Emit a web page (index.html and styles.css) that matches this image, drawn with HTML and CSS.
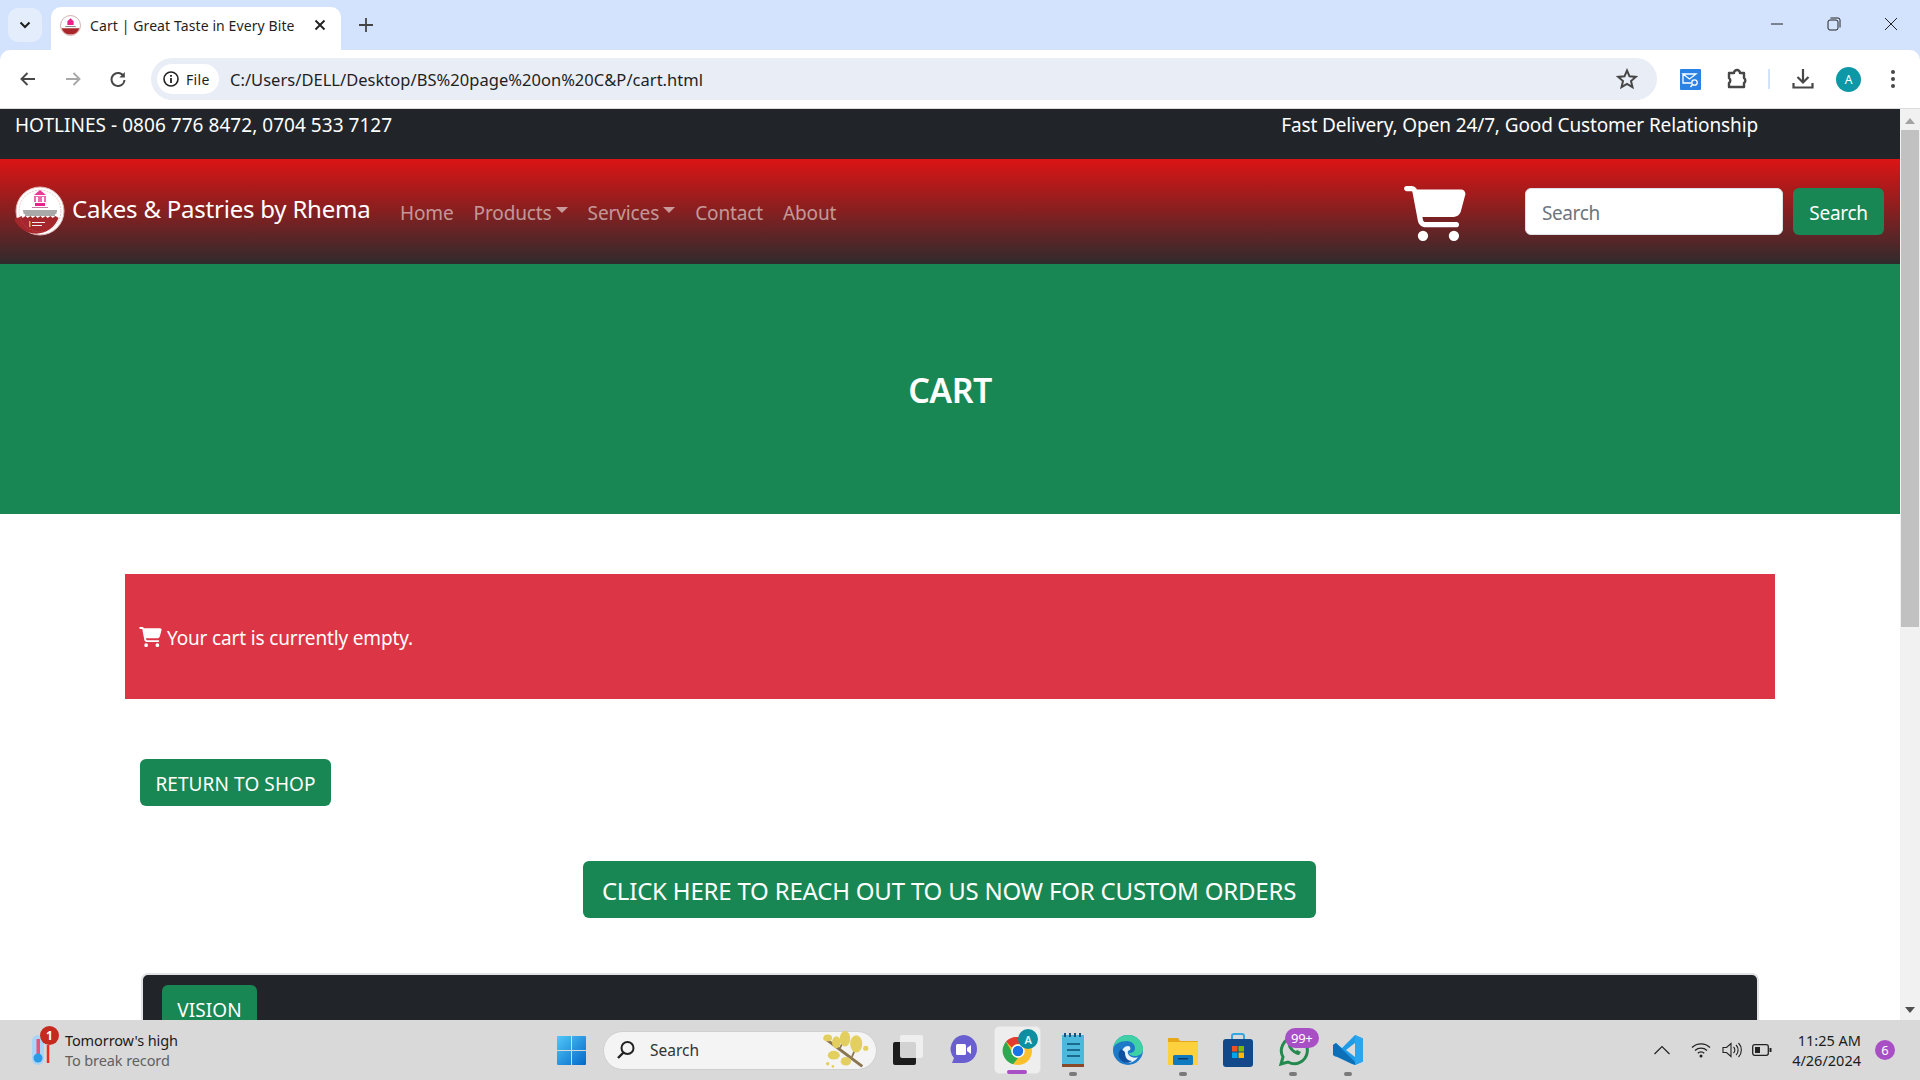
FILE: index.html
```html
<!DOCTYPE html>
<html lang="en">
<head>
<meta charset="utf-8">
<title>Cart | Great Taste in Every Bite</title>
<link rel="stylesheet" href="styles.css">
</head>
<body>
<div class="screen">
  <header class="chrome">
    <div class="tabstrip">
      <div class="tab-menu"><svg width="12" height="8" viewBox="0 0 12 8"><path d="M1.500 1.500 6 6l4.500-4.500" fill="none" stroke="#1f1f1f" stroke-width="2"/></svg></div>
      <div class="tab">
        <svg class="favicon" viewBox="0 0 20 20"><circle cx="10" cy="10" r="9.500" fill="#fff" stroke="#c9a0a0" stroke-width=".8"/><path d="M1.500 12.500h17a9 9 0 0 1-17 0z" fill="#a9272b"/><path d="M7 9.500V6l3-3 3 3v3.500z" fill="#e9258c"/><rect x="5" y="10.500" width="10" height="1" fill="#888"/></svg>
        <span class="tab-title">Cart | Great Taste in Every Bite</span>
        <svg class="tab-close" width="12" height="12" viewBox="0 0 12 12"><path d="M1.500 1.500l9 9m0-9l-9 9" stroke="#1f1f1f" stroke-width="1.800"/></svg>
      </div>
      <svg class="new-tab" width="14" height="14" viewBox="0 0 14 14"><path d="M7 0v14M0 7h14" stroke="#444" stroke-width="1.800"/></svg>
      <div class="win-controls">
        <svg width="14" height="14" viewBox="0 0 14 14"><path d="M1 7h12" stroke="#222" stroke-width="1"/></svg>
        <svg width="14" height="14" viewBox="0 0 14 14"><rect x="1" y="3" width="10" height="10" rx="2" fill="none" stroke="#222"/><path d="M3.500 1h7.500a2 2 0 0 1 2 2v7.500" fill="none" stroke="#222"/></svg>
        <svg width="14" height="14" viewBox="0 0 14 14"><path d="M1 1l12 12M13 1L1 13" stroke="#222" stroke-width="1"/></svg>
      </div>
    </div>
    <div class="toolbar">
      <svg class="tb-icon" width="18" height="18" viewBox="0 0 18 18"><path d="M16 9H3M8.500 3 2.500 9l6 6" fill="none" stroke="#474747" stroke-width="1.900"/></svg>
      <svg class="tb-icon" width="18" height="18" viewBox="0 0 18 18"><path d="M2 9h13M9.500 3l6 6-6 6" fill="none" stroke="#a8a8a8" stroke-width="1.900"/></svg>
      <svg class="tb-icon" width="18" height="18" viewBox="0 0 18 18"><path d="M14.800 6.500A6.500 6.500 0 1 0 15.500 10" fill="none" stroke="#474747" stroke-width="1.900"/><path d="M15.800 2v5.500h-5.500z" fill="#474747"/></svg>
      <div class="omnibox">
        <div class="site-chip">
          <svg width="16" height="16" viewBox="0 0 16 16"><circle cx="8" cy="8" r="7" fill="none" stroke="#222" stroke-width="1.600"/><path d="M8 7v5M8 4v1.800" stroke="#222" stroke-width="1.800"/></svg>
          <span>File</span>
        </div>
        <span class="url">C:/Users/DELL/Desktop/BS%20page%20on%20C&amp;P/cart.html</span>
        <svg class="star" width="22" height="22" viewBox="0 0 22 22"><path d="M11 2.500l2.500 5.800 6.300.6-4.800 4.100 1.500 6.200L11 16l-5.500 3.200L7 13 2.200 8.900l6.300-.6z" fill="none" stroke="#474747" stroke-width="2"/></svg>
      </div>
      <div class="ext-group">
        <svg width="21" height="21" viewBox="0 0 21 21"><rect width="21" height="21" rx="1" fill="#2a82e4"/><path d="M3 5h13l-6.500 5zM3 5v9h8" fill="none" stroke="#fff" stroke-width="1.300"/><circle cx="14.500" cy="13.500" r="2.700" fill="none" stroke="#fff" stroke-width="1.300"/><path d="M12.500 15.500l-2 2.500" stroke="#fff" stroke-width="1.300"/></svg>
        <svg width="22" height="22" viewBox="0 0 22 22"><path d="M3 5h5a3 3 0 0 1 6 0h4v5a3 3 0 0 1 0 5v4H3v-4a3 3 0 0 0 0-5z" fill="none" stroke="#474747" stroke-width="2.400" stroke-linejoin="round"/></svg>
        <span class="tb-divider"></span>
        <svg width="22" height="22" viewBox="0 0 22 22"><path d="M11 1v13M5.500 9l5.500 5.500L16.500 9" fill="none" stroke="#474747" stroke-width="2.200"/><path d="M1.500 15v4.500h19V15" fill="none" stroke="#474747" stroke-width="2.200"/></svg>
        <span class="avatar">A</span>
        <svg width="6" height="20" viewBox="0 0 6 20"><circle cx="3" cy="3" r="2" fill="#474747"/><circle cx="3" cy="10" r="2" fill="#474747"/><circle cx="3" cy="17" r="2" fill="#474747"/></svg>
      </div>
    </div>
  </header>

  <div class="viewport">
    <main class="page">
      <div class="topbar">
        <span class="hotlines">HOTLINES - 0806 776 8472, 0704 533 7127</span>
        <span class="topbar-right">Fast Delivery, Open 24/7, Good Customer Relationship</span>
      </div>
      <nav class="navbar">
        <svg class="logo" viewBox="0 0 50 50">
          <circle cx="25" cy="25" r="24" fill="#fff" stroke="#e0b0b0" stroke-width="1"/>
          <path d="M2.500 32l4-2 1 2 3-2 2 2 3-2 2 2 3-2 2 2 3-2 2 2 3-2 2 2 3-2 2 2 3-2 3 2a24 24 0 0 1-45 0z" fill="#a5262b"/>
          <circle cx="25" cy="25" r="21" fill="none" stroke="#c96a6a" stroke-width=".6" stroke-dasharray="2 1" opacity=".6"/>
          <path d="M25 4l6 5H19z" fill="#ea3a98"/>
          <path d="M19 10h12v6H19z" fill="#f06ab0"/>
          <path d="M21 11h2v5h-2zM27 11h2v5h-2z" fill="#fff"/>
          <path d="M20 17h10v3H20z" fill="#e8228b"/>
          <rect x="17" y="21" width="16" height="1" fill="#c77aa5"/>
          <rect x="8" y="24.500" width="34" height="1" fill="#555"/>
          <rect x="8.500" y="26.500" width="33" height="1" fill="#555"/>
          <rect x="10" y="28.500" width="30" height="1" fill="#555"/>
          <rect x="14" y="35" width="1.500" height="6" fill="#e8b030"/>
          <rect x="17" y="36" width="13" height="1" fill="#eee"/>
          <rect x="17" y="39" width="10" height="1" fill="#eee"/>
        </svg>
        <span class="brand">Cakes &amp; Pastries by Rhema</span>
        <ul class="nav-links">
          <li>Home</li>
          <li class="dropdown">Products</li>
          <li class="dropdown">Services</li>
          <li>Contact</li>
          <li>About</li>
        </ul>
        <svg class="nav-cart" viewBox="0 0 576 512"><path fill="#fff" d="M0 24C0 10.700 10.700 0 24 0H69.500c22 0 41.500 12.800 50.600 32h411c26.300 0 45.500 25 38.600 50.400l-41 152.300c-8.500 31.400-37 53.300-69.500 53.300H170.700l5.400 28.500c2.200 11.300 12.100 19.500 23.600 19.500H488c13.300 0 24 10.700 24 24s-10.700 24-24 24H199.700c-34.600 0-64.300-24.600-70.700-58.500L77.400 54.500c-.7-3.800-4-6.500-7.900-6.500H24C10.700 48 0 37.300 0 24zM128 464a48 48 0 1 1 96 0 48 48 0 1 1 -96 0zm336-48a48 48 0 1 1 0 96 48 48 0 1 1 0-96z"/></svg>
        <div class="search-form">
          <div class="search-input">Search</div>
          <div class="btn search-btn">Search</div>
        </div>
      </nav>
      <section class="hero"><h1>CART</h1></section>
      <div class="alert">
        <svg class="alert-cart" viewBox="0 0 576 512"><path fill="#fff" d="M0 24C0 10.700 10.700 0 24 0H69.500c22 0 41.500 12.800 50.600 32h411c26.300 0 45.500 25 38.600 50.400l-41 152.300c-8.500 31.400-37 53.300-69.500 53.300H170.700l5.400 28.500c2.200 11.300 12.100 19.500 23.600 19.500H488c13.300 0 24 10.700 24 24s-10.700 24-24 24H199.700c-34.600 0-64.300-24.600-70.700-58.500L77.400 54.500c-.7-3.800-4-6.500-7.900-6.500H24C10.700 48 0 37.300 0 24zM128 464a48 48 0 1 1 96 0 48 48 0 1 1 -96 0zm336-48a48 48 0 1 1 0 96 48 48 0 1 1 0-96z"/><path fill="#fff" d="M110 50h440l-45 200H150z"/></svg>
        <span>Your cart is currently empty.</span>
      </div>
      <div class="btn return-btn">RETURN TO SHOP</div>
      <div class="custom-row"><div class="btn custom-btn">CLICK HERE TO REACH OUT TO US NOW FOR CUSTOM ORDERS</div></div>
      <section class="info-card"><div class="btn vision-btn">VISION</div></section>
    </main>
    <aside class="scrollbar">
      <span class="arrow-up"></span>
      <div class="thumb"></div>
      <span class="arrow-down"></span>
    </aside>
  </div>

  <footer class="taskbar">
    <div class="weather">
      <div class="weather-icon">
        <svg width="24" height="34" viewBox="0 0 24 34"><rect x="2" y="2" width="12" height="30" rx="6" fill="#a9d4f7"/><rect x="6.500" y="6" width="3.500" height="16" fill="#e8527a"/><circle cx="8" cy="25" r="4.500" fill="#2b9be8"/><path d="M18 12v18" stroke="#f02a1c" stroke-width="2.500"/></svg>
        <span class="weather-badge">1</span>
      </div>
      <div class="weather-text"><div>Tomorrow's high</div><div class="muted">To break record</div></div>
    </div>
    <div class="task-center">
      <svg class="win-logo" viewBox="0 0 29 29"><defs><linearGradient id="wg" x1="0" y1="0" x2="1" y2="1"><stop offset="0" stop-color="#4fc8f8"/><stop offset="1" stop-color="#0567c9"/></linearGradient></defs><path fill="url(#wg)" d="M0 1a1 1 0 0 1 1-1h13v14H0zM15 0h13a1 1 0 0 1 1 1v13H15zM0 15h14v14H1a1 1 0 0 1-1-1zM15 15h14v13a1 1 0 0 1-1 1H15z"/></svg>
      <div class="task-search">
        <svg width="20" height="20" viewBox="0 0 20 20"><circle cx="11.500" cy="8" r="6" fill="none" stroke="#222" stroke-width="2"/><path d="M7.500 12.500 2 18" stroke="#222" stroke-width="2.400"/></svg>
        <span>Search</span>
        <svg class="branch" width="56" height="38" viewBox="0 0 56 44"><path d="M4 8l44 33" stroke="#8a7550" stroke-width="3.500"/><path d="M22 20l6-12M36 30l6-14" stroke="#8a7550" stroke-width="2"/><g fill="#e3cf5f"><ellipse cx="8" cy="8" rx="5" ry="4"/><ellipse cx="18" cy="13" rx="5" ry="7"/><ellipse cx="28" cy="9" rx="6" ry="9"/><ellipse cx="41" cy="15" rx="7" ry="10"/><ellipse cx="15" cy="28" rx="7" ry="5"/><ellipse cx="29" cy="35" rx="6" ry="5"/><circle cx="52" cy="20" r="3"/><circle cx="8" cy="38" r="2"/><circle cx="14" cy="41" r="1.500"/></g></svg>
      </div>
      <div class="apps">
        <div class="app">
          <svg width="30" height="30" viewBox="0 0 30 30"><rect x="0" y="7" width="23" height="23" rx="2" fill="#1c1c1c"/><rect x="7" y="0" width="23" height="23" rx="2" fill="#f2f2f2" fill-opacity=".85"/></svg>
        </div>
        <div class="app">
          <svg width="30" height="32" viewBox="0 0 30 32"><path d="M15 1a14 14 0 0 1 0 28H4l2-5A14 14 0 0 1 15 1z" fill="#6a5fd0"/><rect x="8" y="10" width="10" height="11" rx="1.500" fill="#fff"/><path d="M19 14l4-3v9l-4-3z" fill="#fff"/></svg>
        </div>
        <div class="app active">
          <svg width="32" height="32" viewBox="0 0 32 32"><circle cx="16" cy="17" r="14" fill="#fbc02d"/><path d="M16 3a14 14 0 0 1 12.100 7H16a7 7 0 0 0-6.100 3.500L4 7.500A14 14 0 0 1 16 3z" fill="#e33b2e"/><path d="M4 7.500l6 10.500a7 7 0 0 0 6 6l-5 6.200A14 14 0 0 1 4 7.500z" fill="#2da94f"/><circle cx="16" cy="17" r="6" fill="#1a73e8" stroke="#fff" stroke-width="1.500"/></svg>
          <span class="chrome-badge">A</span>
          <span class="active-bar"></span>
        </div>
        <div class="app running">
          <svg width="24" height="36" viewBox="0 0 24 36"><rect x="1" y="3" width="22" height="29" fill="#4cb8dc"/><rect x="1" y="32" width="22" height="3" fill="#8a4a2a"/><path d="M4 1v4M9 1v4M14 1v4M19 1v4" stroke="#1d4f78" stroke-width="2"/><path d="M6 12h13M6 18h13M6 24h13" stroke="#1a6a90" stroke-width="2"/></svg>
        </div>
        <div class="app">
          <svg width="30" height="30" viewBox="0 0 30 30"><circle cx="15" cy="15" r="15" fill="#1d7ac9"/><path d="M0 14C1 5 8 0 15 0c9 0 15 7 15 14 0 5-4 7-8 7-3 0-6-1-6-3 4 0 6-2 6-5 0-4-4-7-8-7C7 6 1 9 0 14z" fill="#3fd0a6"/><path d="M9 17c0-3 3-6 6-6 2 0 3 2 2 4-3 0-3 4 0 6 2 2 6 2 8 1-3 5-9 7-13 5-2-2-3-6-3-10z" fill="#fff" opacity=".9"/><path d="M12 18c0 5 3 8 7 8-4 3-9 2-12-2-2-3-2-7 1-10 1 1 4 2 4 4z" fill="#0f4fa0"/></svg>
        </div>
        <div class="app running">
          <svg width="30" height="30" viewBox="0 0 30 30"><path d="M0 3h10l2 3h18v24H0z" fill="#e6a819"/><rect y="7" width="30" height="23" fill="#fdd03d"/><rect x="5" y="20" width="20" height="10" rx="1.500" fill="#0f7ac0"/><rect x="10" y="23" width="10" height="1.500" fill="#053b6b"/></svg>
        </div>
        <div class="app">
          <svg width="30" height="36" viewBox="0 0 30 36"><path d="M9 8V4a2 2 0 0 1 2-2h8a2 2 0 0 1 2 2v4" fill="none" stroke="#36a6e0" stroke-width="2"/><rect y="7" width="30" height="28" rx="3" fill="#11498a"/><rect x="9" y="14" width="5.500" height="5.500" fill="#f25022"/><rect x="15.500" y="14" width="5.500" height="5.500" fill="#7fba00"/><rect x="9" y="20.500" width="5.500" height="5.500" fill="#00a4ef"/><rect x="15.500" y="20.500" width="5.500" height="5.500" fill="#ffb900"/></svg>
        </div>
        <div class="app running">
          <svg width="32" height="32" viewBox="0 0 32 32"><path d="M4 30l2-7A13 13 0 1 1 11 28z" fill="none" stroke="#25894f" stroke-width="3"/><path d="M11 10c-1 4 6 11 11 11l2-3-4-2-1 1c-2-1-3-2-4-4l1-1-2-4z" fill="#25894f"/></svg>
          <span class="wa-badge">99+</span>
        </div>
        <div class="app running">
          <svg width="30" height="30" viewBox="0 0 30 30"><path d="M22 0l8 3.500v23L22 30 9 17l-6 5-3-2v-10l3-2 6 5z" fill="#1f9ce8"/><path d="M22 8v14l-9-7z" fill="#dcdcdc"/><path d="M22 0l8 3.500v23L22 30z" fill="#2aa5ee"/><path d="M0 10l3-2 19 19v3l-3-1L0 20z" fill="#0d6fb8"/></svg>
        </div>
      </div>
    </div>
    <div class="tray">
      <svg width="18" height="10" viewBox="0 0 18 10"><path d="M1.500 9 9 1.500 16.500 9" fill="none" stroke="#222" stroke-width="1.200"/></svg>
      <svg class="tray-wifi" width="20" height="16" viewBox="0 0 20 16"><path d="M1 5.500a13 13 0 0 1 18 0M4 8.500a9 9 0 0 1 12 0M6.800 11.300a4.500 4.500 0 0 1 6.400 0" fill="none" stroke="#222" stroke-width="1.300"/><circle cx="10" cy="14" r="1.500" fill="#222"/></svg>
      <svg class="tray-vol" width="20" height="16" viewBox="0 0 20 16"><path d="M1 5.500h3.500L9 1.500v13l-4.500-4H1z" fill="none" stroke="#222" stroke-width="1.100"/><path d="M11.500 5a4 4 0 0 1 0 6M14 3a7 7 0 0 1 0 10M16.500 1a10 10 0 0 1 0 14" fill="none" stroke="#222" stroke-width="1.100"/></svg>
      <svg class="tray-batt" width="20" height="12" viewBox="0 0 20 12"><rect x=".7" y=".7" width="15.600" height="10.600" rx="2" fill="none" stroke="#222" stroke-width="1.300"/><rect x="3" y="3" width="5" height="6" fill="#222"/><rect x="17.500" y="4" width="2" height="4" fill="#222"/></svg>
      <div class="clock"><div>11:25 AM</div><div>4/26/2024</div></div>
      <span class="notif">6</span>
    </div>
  </footer>
</div>
</body>
</html>
```

FILE: styles.css
```css
* { box-sizing: border-box; }
html, body { margin: 0; padding: 0; height: 100%; overflow: hidden; }
body { font-family: "Noto Sans", "Open Sans", sans-serif; color: #212529; background: #fff; }
.screen { width: 1920px; height: 1080px; display: flex; flex-direction: column; overflow: hidden; }

/* browser chrome */
.chrome { height: 109px; flex: none; background: #d3e3fd; display: flex; flex-direction: column; }
.tabstrip { height: 50px; display: flex; align-items: flex-start; position: relative; }
.tab-menu { width: 34px; height: 34px; margin: 8px 0 0 8px; border-radius: 10px; background: #e4edfc; display: flex; align-items: center; justify-content: center; }
.tab { width: 290px; height: 43px; margin: 7px 0 0 9px; background: #fff; border-radius: 10px 10px 0 0; display: flex; align-items: center; padding: 0 0 7px 9px; }
.favicon { width: 21px; height: 21px; flex: none; }
.tab-title { font-size: 14px; letter-spacing: .1px; color: #1f1f1f; margin-left: 9px; width: 214px; white-space: nowrap; }
.tab-close { margin-left: 10px; }
.new-tab { margin: 18px 0 0 18px; }
.win-controls { margin-left: auto; margin-right: 22px; margin-top: 17px; display: flex; gap: 43px; }
.toolbar { height: 59px; background: #fff; border-radius: 10px 10px 0 0; border-bottom: 1px solid #dcdcdc; display: flex; align-items: center; padding: 0 19px 0 19px; }
.tb-icon { margin-right: 27px; flex: none; }
.tb-icon:nth-child(3) { margin-right: 24px; }
.omnibox { width: 1506px; height: 42px; background: #e9edf6; border-radius: 21px; display: flex; align-items: center; padding: 0 19px 0 6px; margin-left: 0; flex: none; }
.site-chip { width: 62px; height: 30px; background: #fff; border-radius: 15px; display: flex; align-items: center; gap: 7px; padding-left: 6px; font-size: 14px; letter-spacing: .3px; color: #1f1f1f; }
.url { margin-left: 11px; font-size: 16.500px; letter-spacing: .03px; color: #1f1f1f; }
.star { margin-left: auto; }
.ext-group { display: flex; align-items: center; margin-left: 23px; flex: none; }
.ext-group > svg:nth-child(2) { margin-left: 25px; }
.tb-divider { width: 2px; height: 20px; background: #d3e3fd; margin-left: 20px; }
.ext-group > svg:nth-child(4) { margin-left: 22px; }
.avatar { width: 25px; height: 25px; border-radius: 50%; background: #0e97a6; color: #fff; font-size: 12px; display: flex; align-items: center; justify-content: center; margin-left: 22px; }
.ext-group > svg:last-child { margin-left: 29px; }

/* page */
.viewport { flex: 1; min-height: 0; display: flex; overflow: hidden; }
.page { width: 1900px; flex: none; overflow: hidden; }
.topbar { height: 50px; background: #212529; color: #fff; display: flex; justify-content: space-between; padding: 2px 142px 0 15px; font-size: 19px; line-height: 28px; }
.hotlines { letter-spacing: .04px; }
.topbar-right { letter-spacing: -.12px; }
.navbar { height: 105px; background: linear-gradient(#dc1414, #2f2b2d); display: flex; align-items: center; padding: 0 16px 0 15px; }
.logo { width: 50px; height: 50px; flex: none; margin-top: -2px; }
.brand { color: #fff; font-size: 24px; letter-spacing: -.22px; margin: -6px 0 0 7px; width: 328px; white-space: nowrap; }
.nav-links { list-style: none; margin: 2px 0 0; padding: 0; display: flex; gap: 20px; color: rgba(255, 255, 255, .55); font-size: 19px; letter-spacing: -.12px; }
.dropdown { display: flex; align-items: center; }
.dropdown::after { content: ""; margin-left: 4px; margin-top: -5px; border-top: 6px solid; border-left: 6px solid transparent; border-right: 6px solid transparent; }
.nav-cart { width: 62px; height: 55px; margin-left: auto; margin-top: 3px; flex: none; }
.search-form { display: flex; gap: 10px; margin-left: 59px; }
.search-input { width: 258px; height: 47px; background: #fff; border: 1px solid #dee2e6; border-radius: 6px; padding-left: 16px; line-height: 49px; font-size: 19px; letter-spacing: -.4px; color: #6c757d; }
.btn { background: #198754; color: #fff; border-radius: 6px; display: flex; align-items: center; justify-content: center; white-space: nowrap; font-size: 19px; letter-spacing: -.3px; padding-top: 2px; }
.search-btn { width: 91px; height: 47px; }
.hero { height: 250px; padding-top: 2px; background: #198754; display: flex; align-items: center; justify-content: center; }
.hero h1 { margin: 0; color: #fff; font-size: 34px; font-weight: 600; letter-spacing: -.5px; }
.alert { margin: 60px 125px 0; height: 125px; background: #dc3545; color: #fff; display: flex; align-items: center; padding: 2px 0 0 14px; font-size: 19px; letter-spacing: -.15px; }
.alert-cart { width: 23px; height: 20px; margin-right: 5px; margin-top: -2px; flex: none; }
.return-btn { width: 191px; height: 47px; margin: 60px 0 0 140px; letter-spacing: .1px; }
.custom-row { display: flex; justify-content: center; margin-top: 55px; padding-right: 2px; }
.custom-btn { width: 733px; height: 57px; font-size: 24px; letter-spacing: -.2px; padding-top: 2px; }
.info-card { margin: 55px 141px 0; height: 120px; background: #212529; border: 2px solid #e2e3e5; border-radius: 7px; padding: 10px 19px; }
.vision-btn { width: 95px; height: 47px; letter-spacing: .1px; }

/* scrollbar */
.scrollbar { width: 20px; flex: none; background: #f1f1f1; display: flex; flex-direction: column; align-items: center; position: relative; }
.arrow-up { margin-top: 9px; border-bottom: 6px solid #a3a3a3; border-left: 5px solid transparent; border-right: 5px solid transparent; }
.thumb { width: 18px; height: 497px; background: #c1c1c1; margin-top: 6px; }
.arrow-down { margin-top: auto; margin-bottom: 7px; border-top: 6px solid #505050; border-left: 5px solid transparent; border-right: 5px solid transparent; }

/* taskbar */
.taskbar { height: 60px; flex: none; background: #d9d9d9; display: flex; align-items: center; font-size: 14.500px; color: #1c1c1c; position: relative; }
.weather { width: 557px; flex: none; display: flex; align-items: center; padding-left: 30px; }
.weather-icon { position: relative; width: 35px; height: 34px; }
.weather-badge { position: absolute; left: 10px; top: -7px; width: 19px; height: 19px; border-radius: 50%; background: #c62a1e; color: #fff; font-size: 12px; font-weight: 700; display: flex; align-items: center; justify-content: center; }
.weather-text { line-height: 20px; letter-spacing: -.1px; margin-top: -1px; }
.muted { color: #616161; }
.task-center { display: flex; align-items: center; }
.win-logo { width: 29px; height: 29px; flex: none; }
.task-search { width: 274px; height: 39px; margin-left: 17px; background: #f4f4f4; border: 1px solid #cfcfcf; border-radius: 20px; display: flex; align-items: center; padding-left: 12px; font-size: 15.500px; letter-spacing: 0; color: #333; position: relative; }
.task-search span { margin-left: 14px; }
.branch { margin-left: auto; margin-right: 3px; }
.apps { display: flex; margin-left: 3px; }
.app { width: 55.100px; height: 48px; display: flex; align-items: center; justify-content: center; position: relative; }
.app.active::before { content: ""; position: absolute; left: 4px; right: 4px; top: 0; bottom: 0; background: #eeeeee; border: 1px solid #e2e2e2; border-radius: 5px; }
.app.active svg { position: relative; }
.app.running::after { content: ""; position: absolute; bottom: -2px; left: 50%; margin-left: -4px; width: 8px; height: 4px; border-radius: 2px; background: #7a7a7a; }
.active-bar { position: absolute; bottom: 0; left: 17px; width: 20px; height: 4px; border-radius: 2px; background: #a94fc5; }
.chrome-badge { position: absolute; top: 3px; right: 7px; width: 20px; height: 20px; border-radius: 50%; background: #0e8fa0; color: #e6f4f5; font-size: 11px; font-weight: 600; display: flex; align-items: center; justify-content: center; }
.wa-badge { position: absolute; top: 2px; right: 2px; width: 34px; height: 20px; border-radius: 10px; background: #a94fc5; color: #fff; font-size: 13px; letter-spacing: -.3px; display: flex; align-items: center; justify-content: center; }
.tray { margin-left: auto; display: flex; align-items: center; padding-right: 25px; }
.tray-wifi { margin-left: 20px; }
.tray-vol { margin-left: 11px; }
.tray-batt { margin-left: 10px; }
.clock { margin-left: 20px; text-align: right; line-height: 20px; font-size: 14.500px; letter-spacing: 0; }
.notif { width: 20px; height: 20px; border-radius: 50%; background: #a94fc5; color: #fff; font-size: 13px; display: flex; align-items: center; justify-content: center; margin-left: 14px; }
```
